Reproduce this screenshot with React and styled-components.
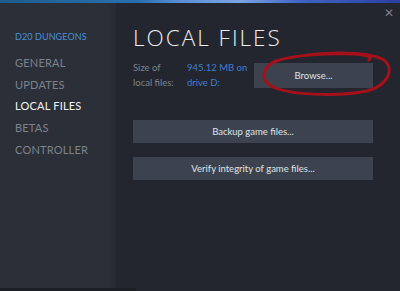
import styled, { createGlobalStyle } from "styled-components";

const GlobalStyle = createGlobalStyle`
  html, body {
    margin: 0;
    padding: 0;
    background: #23262e;
    font-family: "Lato", "Open Sans", sans-serif;
  }
`;

const Window = styled.div`
  position: relative;
  width: 400px;
  height: 291px;
  display: flex;
  flex-direction: column;
  overflow: hidden;
  background: #23262e;
`;

const TopStrip = styled.div`
  height: 3px;
  flex-shrink: 0;
  background: linear-gradient(
    90deg,
    #1d5c8c 0%,
    #2a6fb0 35%,
    #5b8fd6 45%,
    #7aa4e4 60%,
    #3f64c4 75%,
    #2a3fa0 100%
  );
`;

const Body = styled.div`
  flex: 1;
  display: flex;
  min-height: 0;
`;

const Sidebar = styled.nav`
  width: 116px;
  flex-shrink: 0;
  background: linear-gradient(90deg, #2b2f38 0%, #2b2f38 92%, #272a32 100%);
  padding: 26px 0 0 15px;
  box-sizing: border-box;
  display: flex;
  flex-direction: column;
  position: relative;
`;

const GameName = styled.div`
  color: #4a8fd9;
  font-size: 9px;
  letter-spacing: 0.1px;
  margin-bottom: 7px;
  height: 16px;
  line-height: 16px;
`;

const NavItem = styled.div`
  color: ${(p) => (p.$active ? "#f2f4f6" : "#7d838c")};
  font-size: 11px;
  height: 21.7px;
  line-height: 21.7px;
  letter-spacing: 0.2px;
`;

const BottomBar = styled.div`
  position: absolute;
  left: 0;
  bottom: 0;
  width: 136px;
  height: 3px;
  background: #1c1f25;
`;

const Main = styled.main`
  flex: 1;
  padding: 20px 27px 0 17px;
  position: relative;
`;

const Close = styled.div`
  position: absolute;
  top: 4px;
  right: 6px;
  color: #7a7f88;
  font-size: 12px;
  line-height: 12px;
`;

const Title = styled.h1`
  margin: 0;
  color: #eef0f2;
  font-family: "Open Sans", sans-serif;
  font-weight: 300;
  font-size: 22.5px;
  letter-spacing: 2px;
  line-height: 30px;
`;

const InfoRow = styled.div`
  display: flex;
  align-items: center;
  margin-top: 7px;
  position: relative;
`;

const InfoLabel = styled.div`
  color: #7d838c;
  font-size: 9.5px;
  line-height: 15px;
  width: 54px;
`;

const InfoValue = styled.div`
  color: #3f7fcf;
  font-size: 9.5px;
  line-height: 15px;
  width: 67px;
`;

const Button = styled.div`
  background: #3d434e;
  color: #dfe3e8;
  font-size: 9.5px;
  height: ${(p) => p.$h || 23}px;
  display: flex;
  align-items: center;
  justify-content: center;
  width: ${(p) => (p.$w ? `${p.$w}px` : "100%")};
  box-sizing: border-box;
`;

const ButtonStack = styled.div`
  display: flex;
  flex-direction: column;
  gap: 14px;
  margin-top: 30px;
`;

const Scribble = styled.svg`
  position: absolute;
  left: 124px;
  top: -11px;
  pointer-events: none;
`;

export default function App() {
  const items = ["GENERAL", "UPDATES", "LOCAL FILES", "BETAS", "CONTROLLER"];
  return (
    <>
      <GlobalStyle />
      <Window>
        <TopStrip />
        <Body>
          <Sidebar>
            <GameName>D20 DUNGEONS</GameName>
            {items.map((item) => (
              <NavItem key={item} $active={item === "LOCAL FILES"}>
                {item}
              </NavItem>
            ))}
            <BottomBar />
          </Sidebar>
          <Main>
            <Close>✕</Close>
            <Title>LOCAL FILES</Title>
            <InfoRow>
              <InfoLabel>
                Size of
                <br />
                local files:
              </InfoLabel>
              <InfoValue>
                945.12 MB on
                <br />
                drive D:
              </InfoValue>
              <Button $w={119} $h={25}>Browse...</Button>
              <Scribble width="140" height="50" viewBox="0 0 140 50">
                <path
                  d="M50 6 C84 2 118 4 128 12 C137 20 132 36 110 42 C80 48 30 46 14 37 C3 30 5 18 19 12 C36 6 72 4 98 5 C110 6 116 8 112 11"
                  fill="none"
                  stroke="#a5111b"
                  strokeWidth="3"
                  strokeLinecap="round"
                />
              </Scribble>
            </InfoRow>
            <ButtonStack>
              <Button>Backup game files...</Button>
              <Button>Verify integrity of game files...</Button>
            </ButtonStack>
          </Main>
        </Body>
      </Window>
    </>
  );
}
